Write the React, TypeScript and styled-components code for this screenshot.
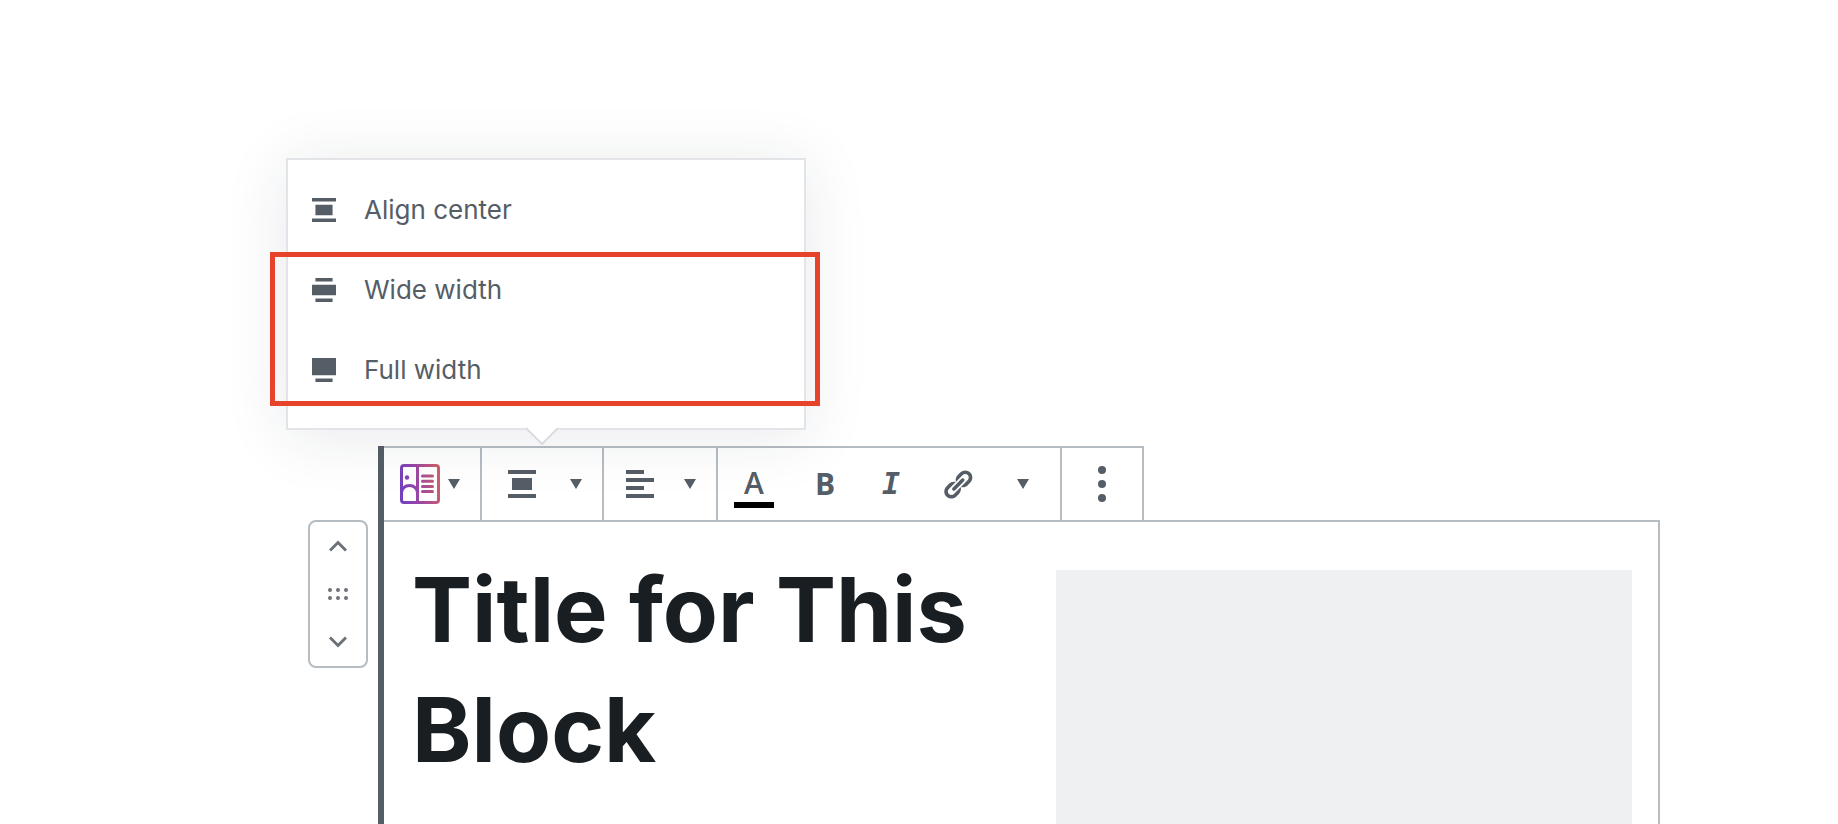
import React from "react";
import styled, { createGlobalStyle } from "styled-components";

const color = {
  ink: "#191e23",
  icon: "#555d66",
  mover: "#6c7078",
  line: "#b5bcc2",
  popoverLine: "#e2e4e7",
  media: "#eff0f2",
  highlight: "#e7432b",
};

const GlobalStyle = createGlobalStyle`
  *, *::before, *::after { box-sizing: border-box; }
  body {
    margin: 0;
    background: #fff;
    color: ${color.ink};
    font-family: Inter, "Liberation Sans", sans-serif;
  }
  button {
    margin: 0;
    padding: 0;
    border: 0;
    background: none;
    color: inherit;
    font: inherit;
    cursor: pointer;
  }
  svg { display: block; flex: none; }
`;

const Editor = styled.main`
  display: flex;
  align-items: stretch;
  gap: 10px;
  min-height: 100vh;
  padding: 446px 178px 0 308px;
`;

const Mover = styled.div`
  display: flex;
  flex-direction: column;
  align-self: flex-start;
  width: 60px;
  margin-top: 74px;
  border: 2px solid ${color.line};
  border-radius: 8px;
  color: ${color.mover};
`;

const MoverButton = styled.button`
  display: flex;
  align-items: center;
  justify-content: center;
  height: 48px;
`;

const Block = styled.section`
  display: flex;
  flex: 1;
  flex-direction: column;
  min-width: 0;
  border-left: 6px solid ${color.icon};
`;

const Toolbar = styled.div`
  display: flex;
  align-self: flex-start;
  height: 74px;
  border-top: 2px solid ${color.line};
  color: ${color.icon};
`;

const ToolbarGroup = styled.div<{ $end?: number }>`
  position: relative;
  display: flex;
  padding-right: ${(p) => p.$end ?? 0}px;
  border-right: 2px solid ${color.line};
`;

const DropdownButton = styled.button<{ $start: number; $gap: number }>`
  display: flex;
  align-items: center;
  gap: ${(p) => p.$gap}px;
  padding: 0 20px 0 ${(p) => p.$start}px;
`;

const FormatButton = styled.button<{ $width?: number }>`
  display: flex;
  align-items: center;
  justify-content: center;
  width: ${(p) => p.$width ?? 66}px;
`;

const ColorButton = styled.button`
  display: flex;
  flex-direction: column;
  align-items: center;
  padding: 16px 18px 0 16px;
`;

const Letter = styled.span<{ $weight?: number }>`
  font-family: "Open Sans", "Noto Sans", sans-serif;
  font-size: 30px;
  font-weight: ${(p) => p.$weight ?? 700};
  line-height: 38px;
`;

const ItalicLetter = styled(Letter)`
  font-family: "DejaVu Sans Mono", monospace;
  font-style: italic;
`;

const Swatch = styled.span`
  width: 40px;
  height: 6px;
  background: #000;
`;

const Popover = styled.div`
  position: absolute;
  z-index: 10;
  bottom: calc(100% + 18px);
  left: 50%;
  width: 520px;
  margin-left: -256px;
  padding: 10px 0 18px;
  border: 2px solid ${color.popoverLine};
  background: #fff;
  box-shadow: 0 6px 60px rgba(25, 38, 65, 0.1);
`;

const PopoverTip = styled.svg`
  position: absolute;
  top: calc(100% - 1px);
  left: 238px;
`;

const MenuItem = styled.button`
  display: flex;
  align-items: center;
  gap: 28px;
  width: 100%;
  height: 80px;
  padding: 0 24px;
  font-size: 26px;
  line-height: 32px;
`;

const Highlight = styled.div`
  position: absolute;
  top: 92px;
  right: -16px;
  left: -18px;
  height: 154px;
  border: 5px solid ${color.highlight};
  pointer-events: none;
`;

const Content = styled.div`
  display: grid;
  flex: 1;
  grid-template-columns: 1fr 1fr;
  gap: 68px;
  padding: 28px 26px 0 28px;
  border-top: 2px solid ${color.line};
  border-right: 2px solid ${color.line};
`;

const Title = styled.h1`
  margin: 0;
  font-size: 90px;
  font-weight: 700;
  line-height: 120px;
`;

const Media = styled.div`
  margin-top: 20px;
  background: ${color.media};
`;

const Caret = () => (
  <svg width="12" height="10" viewBox="0 0 12 10" fill="currentColor" aria-hidden="true">
    <path d="M0 0h12L6 10z" />
  </svg>
);

const AlignCenterIcon = ({ size = 24 }: { size?: number }) => (
  <svg width={size} height={size} viewBox="0 0 14 14" fill="currentColor" aria-hidden="true">
    <path d="M0 0h14v2H0zM2 4h10v6H2zM0 12h14v2H0z" />
  </svg>
);

const WideIcon = () => (
  <svg width="24" height="24" viewBox="0 0 14 14" fill="currentColor" aria-hidden="true">
    <path d="M2 0h10v2H2zM0 4h14v6H0zM2 12h10v2H2z" />
  </svg>
);

const FullIcon = () => (
  <svg width="24" height="24" viewBox="0 0 14 14" fill="currentColor" aria-hidden="true">
    <path d="M0 0h14v10H0zM2 12h10v2H2z" />
  </svg>
);

const TextLeftIcon = () => (
  <svg width="28" height="28" viewBox="0 0 28 28" fill="currentColor" aria-hidden="true">
    <path d="M0 0h18v4H0zM0 8h28v4H0zM0 16h18v4H0zM0 24h28v4H0z" />
  </svg>
);

const BlockIcon = () => (
  <svg width="40" height="40" viewBox="0 0 40 40" fill="none" aria-hidden="true">
    <defs>
      <linearGradient id="blockGradient" gradientUnits="userSpaceOnUse" x1="0" y1="22" x2="40" y2="16">
        <stop offset="0" stopColor="#7440bd" />
        <stop offset="0.45" stopColor="#9b47a4" />
        <stop offset="1" stopColor="#d05f68" />
      </linearGradient>
    </defs>
    <g stroke="url(#blockGradient)" strokeWidth="3">
      <rect x="1.5" y="1.5" width="37" height="37" rx="2.5" />
      <path d="M17.5 2v36" />
      <path d="M1.5 29c0-4.5 3.5-7.5 8-7.5s8 3 8 7.5" />
      <path d="M22.5 12h10M22.5 17.2h10M22.5 22.4h10M22.5 27.6h10" strokeLinecap="round" />
    </g>
    <circle cx="7" cy="13.5" r="2.2" fill="#8443b2" />
  </svg>
);

const LinkIcon = () => (
  <svg width="33" height="33" viewBox="0 0 20 20" fill="currentColor" aria-hidden="true">
    <path d="M17.74 2.76c1.68 1.69 1.68 4.41 0 6.1l-1.53 1.52c-1.12 1.12-2.7 1.47-4.14 1.09l2.62-2.61.76-.77.76-.76c.84-.84.84-2.2 0-3.04-.84-.85-2.2-.85-3.04 0l-.77.76-3.38 3.38c-.37-1.44-.02-3.02 1.1-4.14l1.52-1.53c1.69-1.68 4.42-1.68 6.1 0zM8.59 13.43l5.34-5.34c.42-.42.42-1.1 0-1.52-.44-.43-1.13-.39-1.53 0l-5.33 5.34c-.42.42-.42 1.1 0 1.52.44.43 1.13.39 1.52 0zm-.76 2.29l4.14-4.15c.38 1.44.03 3.02-1.09 4.14l-1.52 1.53c-1.69 1.68-4.41 1.68-6.1 0-1.68-1.68-1.68-4.42 0-6.1l1.53-1.52c1.12-1.12 2.7-1.47 4.14-1.1l-4.14 4.15c-.85.84-.85 2.2 0 3.05.84.84 2.2.84 3.04 0z" />
  </svg>
);

const MoreIcon = () => (
  <svg width="8" height="36" viewBox="0 0 8 36" fill="currentColor" aria-hidden="true">
    <circle cx="4" cy="4" r="4" />
    <circle cx="4" cy="18" r="4" />
    <circle cx="4" cy="32" r="4" />
  </svg>
);

const Chevron = ({ down = false }: { down?: boolean }) => (
  <svg width="18" height="12" viewBox="0 0 18 12" fill="none" stroke="currentColor" strokeWidth="3" aria-hidden="true">
    <path d={down ? "M1 1.5l8 8 8-8" : "M1 10.5l8-8 8 8"} />
  </svg>
);

const DragIcon = () => (
  <svg width="20" height="12" viewBox="0 0 20 12" fill="currentColor" aria-hidden="true">
    {[2, 10].map((y) => [2, 10, 18].map((x) => <circle key={`${x}-${y}`} cx={x} cy={y} r="2" />))}
  </svg>
);

const menuItems = [
  { label: "Align center", icon: <AlignCenterIcon /> },
  { label: "Wide width", icon: <WideIcon /> },
  { label: "Full width", icon: <FullIcon /> },
];

const AlignmentPopover = () => (
  <Popover role="menu" aria-label="Block alignment">
    {menuItems.map((item) => (
      <MenuItem key={item.label} type="button" role="menuitem">
        {item.icon}
        {item.label}
      </MenuItem>
    ))}
    <Highlight />
    <PopoverTip width="32" height="18" viewBox="0 0 32 18" aria-hidden="true">
      <path d="M0 0h32v1L16 17 0 1z" fill="#fff" />
      <path d="M0 1l16 16L32 1" fill="none" stroke="#d9dce0" strokeWidth="2" />
    </PopoverTip>
  </Popover>
);

export default function App() {
  return (
    <>
      <GlobalStyle />
      <Editor>
        <Mover>
          <MoverButton type="button" aria-label="Move up">
            <Chevron />
          </MoverButton>
          <MoverButton type="button" aria-label="Drag block">
            <DragIcon />
          </MoverButton>
          <MoverButton type="button" aria-label="Move down">
            <Chevron down />
          </MoverButton>
        </Mover>
        <Block>
          <Toolbar role="toolbar" aria-label="Block tools">
            <ToolbarGroup>
              <DropdownButton type="button" aria-label="Change block type" $start={16} $gap={8}>
                <BlockIcon />
                <Caret />
              </DropdownButton>
            </ToolbarGroup>
            <ToolbarGroup>
              <DropdownButton type="button" aria-label="Change alignment" aria-expanded="true" $start={26} $gap={34}>
                <AlignCenterIcon size={28} />
                <Caret />
              </DropdownButton>
              <AlignmentPopover />
            </ToolbarGroup>
            <ToolbarGroup>
              <DropdownButton type="button" aria-label="Change text alignment" $start={22} $gap={30}>
                <TextLeftIcon />
                <Caret />
              </DropdownButton>
            </ToolbarGroup>
            <ToolbarGroup $end={4}>
              <ColorButton type="button" aria-label="Text color">
                <Letter $weight={600}>A</Letter>
                <Swatch />
              </ColorButton>
              <FormatButton type="button" aria-label="Bold">
                <Letter>B</Letter>
              </FormatButton>
              <FormatButton type="button" aria-label="Italic">
                <ItalicLetter>I</ItalicLetter>
              </FormatButton>
              <FormatButton type="button" aria-label="Link">
                <LinkIcon />
              </FormatButton>
              <FormatButton type="button" aria-label="More formatting">
                <Caret />
              </FormatButton>
            </ToolbarGroup>
            <ToolbarGroup>
              <FormatButton type="button" aria-label="More options" $width={80}>
                <MoreIcon />
              </FormatButton>
            </ToolbarGroup>
          </Toolbar>
          <Content>
            <Title>Title for This Block</Title>
            <Media />
          </Content>
        </Block>
      </Editor>
    </>
  );
}
